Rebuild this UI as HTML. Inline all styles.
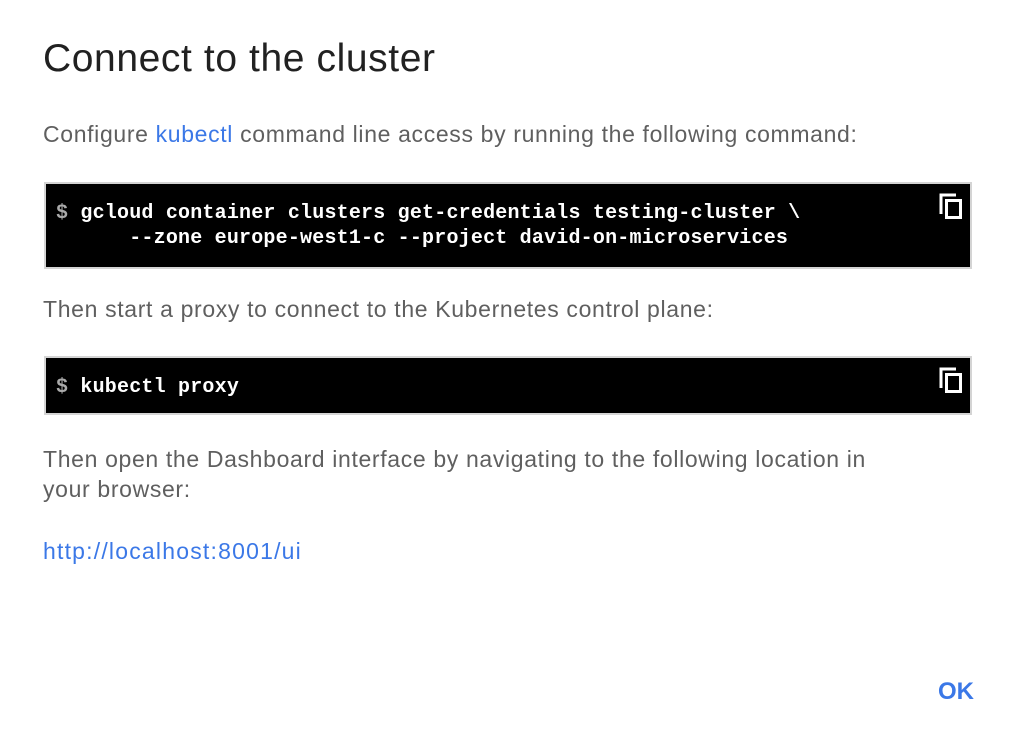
<!DOCTYPE html>
<html><head><style>
body{margin:0;width:1016px;height:738px;background:#fff;font-family:"Liberation Sans",sans-serif;position:relative;overflow:hidden}
.a{position:absolute;white-space:nowrap}
h1{position:absolute;left:43px;top:37px;margin:0;font-weight:normal;font-size:39px;letter-spacing:0.6px;color:#212121}
.p{font-size:23px;letter-spacing:0.65px;color:#5f5f5f}
.b{color:#3b78e7}
.box{position:absolute;left:44px;width:924px;background:#000;border:2px solid #d4d4d4}
.code{position:absolute;left:10px;font-family:"Liberation Mono",monospace;font-weight:bold;font-size:20px;color:#fff;white-space:pre;letter-spacing:0.2px;line-height:25px}
.code .d{color:#aaa}
svg{position:absolute}
</style></head><body>
<h1>Connect to the cluster</h1>
<div class="a p" style="left:43px;top:121px">Configure <span class="b">kubectl</span> command line access by running the following command:</div>
<div class="box" style="top:182px;height:83px">
<div class="code" style="top:17px"><span class="d">$</span> gcloud container clusters get-credentials testing-cluster \
      --zone europe-west1-c --project david-on-microservices</div>
<svg style="left:892px;top:8px" width="26" height="28" viewBox="0 0 26 28"><path d="M3 22V3h15" fill="none" stroke="#fff" stroke-width="3"/><rect x="8.5" y="8.5" width="14" height="17" fill="none" stroke="#fff" stroke-width="3"/></svg>
</div>
<div class="a p" style="left:43px;top:296px">Then start a proxy to connect to the Kubernetes control plane:</div>
<div class="box" style="top:356px;height:55px">
<div class="code" style="top:17px"><span class="d">$</span> kubectl proxy</div>
<svg style="left:892px;top:8px" width="26" height="28" viewBox="0 0 26 28"><path d="M3 22V3h15" fill="none" stroke="#fff" stroke-width="3"/><rect x="8.5" y="8.5" width="14" height="17" fill="none" stroke="#fff" stroke-width="3"/></svg>
</div>
<div class="a p" style="left:43px;top:444px;line-height:30px">Then open the Dashboard interface by navigating to the following location in<br>your browser:</div>
<div class="a p b" style="left:43px;top:538px;letter-spacing:1.2px">http://localhost:8001/ui</div>
<div class="a b" style="left:938px;top:678px;font-size:24px;font-weight:bold">OK</div>
</body></html>
